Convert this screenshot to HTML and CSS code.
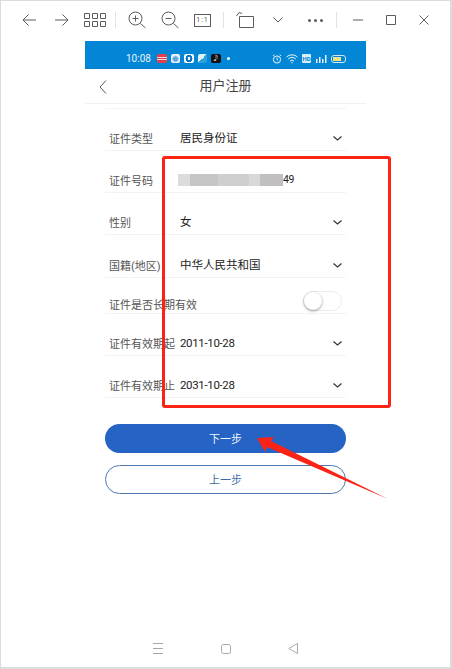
FILE: index.html
```html
<!DOCTYPE html>
<html lang="zh-CN">
<head>
  <meta charset="UTF-8">
  <title>用户注册</title>
  <meta name="viewport" content="width=device-width, initial-scale=1.0">
  <link rel="stylesheet" href="styles.css">
</head>

<body>
  <div class="window">
    <!-- viewer toolbar -->
    <div class="toolbar">
      <span class="tool"><svg width="14" height="12" viewBox="0 0 14 12"><path d="M14 6H1M6.500.5 1 6l5.500 5.500"/></svg></span>
      <span class="tool"><svg width="14" height="12" viewBox="0 0 14 12"><path d="M0 6h13M7.500.5 13 6l-5.500 5.500"/></svg></span>
      <span class="tool"><svg width="22" height="14" viewBox="0 0 22 14"><path d="M.5.500h5v5h-5zM8.500.500h5v5h-5zM16.500.500h5v5h-5zM.5 8.500h5v5h-5zM8.500 8.500h5v5h-5zM16.500 8.500h5v5h-5z"/></svg></span>
      <span class="sep"></span>
      <span class="tool"><svg width="18" height="18" viewBox="0 0 18 18"><circle cx="7.500" cy="7.500" r="6.500"/><path d="m12.500 12.500 5 4.500M4.500 7.500h6M7.500 4.500v6"/></svg></span>
      <span class="tool"><svg width="18" height="18" viewBox="0 0 18 18"><circle cx="7.500" cy="7.500" r="6.500"/><path d="m12.500 12.500 5 4.500M4.500 7.500h6"/></svg></span>
      <span class="tool"><span class="one-to-one">1:1</span></span>
      <span class="sep"></span>
      <span class="tool"><svg width="18" height="18" viewBox="0 0 18 18"><path d="M3.500 5.500h14v11h-14zM.5 5 3 1.500 6 2.500"/></svg></span>
      <span class="tool"><svg width="10" height="6" viewBox="0 0 10 6"><path d="m.5.500 4.500 4.500 4.500-4.500"/></svg></span>
      <span class="tool tool-dots"><i></i><i></i><i></i></span>
      <span class="sep"></span>
      <span class="tool"><svg width="10" height="2" viewBox="0 0 10 2"><path d="M0 1h10"/></svg></span>
      <span class="tool"><svg width="10" height="10" viewBox="0 0 10 10"><path d="M.5.500h9v9h-9z"/></svg></span>
      <span class="tool"><svg width="10" height="10" viewBox="0 0 10 10"><path d="m.5.500 9 9M9.500.500l-9 9"/></svg></span>
    </div>

    <div class="phone">
      <div class="status-bar">
        <span class="time">10:08</span>
        <span class="app-icons">
          <span class="app app-red"></span>
          <span class="app app-paw"></span>
          <span class="app app-ring"></span>
          <span class="app app-send"></span>
          <span class="app app-tiktok">♪</span>
          <span class="dot"></span>
        </span>
        <span class="sys-icons">
          <svg width="10" height="10" viewBox="0 0 10 10"><circle cx="5" cy="5.500" r="3.600"/><path d="M5 3.500v2l1.200 1M1 1.800 2.300.8M9 1.800 7.700.8"/></svg>
          <svg width="12" height="10" viewBox="0 0 12 10"><path d="M.5 3a8 8 0 0 1 11 0M2.200 5a5.500 5.500 0 0 1 7.600 0M4 7a3 3 0 0 1 4 0M5.300 8.800a1 1 0 0 1 1.400 0"/></svg>
          <span class="hd">HD</span>
          <svg class="signal" width="12" height="10" viewBox="0 0 12 10"><path d="M1 5h1.500v4H1zM4 3h1.500v6H4zM7 5h1.500v4H7zM10 1h1.500v8H10z"/></svg>
          <span class="battery"><span class="battery-level"></span></span>
        </span>
      </div>

      <div class="page-header">
        <svg class="back" width="8" height="14" viewBox="0 0 8 14"><path d="M7 .5 1 7l6 6.500"/></svg>
        <span>用户注册</span>
      </div>

      <div class="form">
        <div class="row">
          <span class="label">证件类型</span>
          <span class="value">居民身份证</span>
          <svg class="chevron" width="9" height="5" viewBox="0 0 9 5"><path d="m.5.500 4 3.500 4-3.500"/></svg>
        </div>
        <div class="row">
          <span class="label">证件号码</span>
          <span class="value value-id"><span class="id-mask"></span>49</span>
        </div>
        <div class="row">
          <span class="label">性别</span>
          <span class="value">女</span>
          <svg class="chevron" width="9" height="5" viewBox="0 0 9 5"><path d="m.5.500 4 3.500 4-3.500"/></svg>
        </div>
        <div class="row row-tall">
          <span class="label">国籍(地区)</span>
          <span class="value">中华人民共和国</span>
          <svg class="chevron" width="9" height="5" viewBox="0 0 9 5"><path d="m.5.500 4 3.500 4-3.500"/></svg>
        </div>
        <div class="row row-switch">
          <span class="label">证件是否长期有效</span>
          <span class="switch"><span class="knob"></span></span>
        </div>
        <div class="row">
          <span class="label">证件有效期起</span>
          <span class="value value-date">2011-10-28</span>
          <svg class="chevron" width="9" height="5" viewBox="0 0 9 5"><path d="m.5.500 4 3.500 4-3.500"/></svg>
        </div>
        <div class="row">
          <span class="label">证件有效期止</span>
          <span class="value value-date">2031-10-28</span>
          <svg class="chevron" width="9" height="5" viewBox="0 0 9 5"><path d="m.5.500 4 3.500 4-3.500"/></svg>
        </div>

        <div class="buttons">
          <button class="btn btn-next">下一步</button>
          <button class="btn btn-prev">上一步</button>
        </div>
      </div>

      <div class="nav-bar">
        <svg width="10" height="11" viewBox="0 0 10 11"><path d="M0 .5h10M0 5.500h10M0 10.500h10"/></svg>
        <svg width="10" height="10" viewBox="0 0 10 10"><rect x=".5" y=".5" width="9" height="9" rx="2"/></svg>
        <svg width="10" height="11" viewBox="0 0 10 11"><path d="M9.500.500v10L.8 5.500z"/></svg>
      </div>
    </div>

    <!-- red annotations drawn over the screenshot -->
    <div class="callout"></div>
    <svg class="arrow" width="140" height="72" viewBox="0 0 140 72">
      <path d="M2 9 19 8 16 12 133 70 12 18 10 23z"/>
    </svg>
  </div>
</body>
</html>
```

FILE: styles.css
```css
html, body {
  margin: 0;
  padding: 0;
  height: 100%;
  overflow: hidden;
  background-color: #fff;
  font-family: "Roboto", "Noto Sans CJK SC", sans-serif;
}

.window {
  position: relative;
  display: flex;
  flex-direction: column;
  box-sizing: border-box;
  height: 669px;
  border: 1px solid #dcdcdc;
  border-right-width: 2px;
  border-bottom-width: 2px;
}

/* toolbar */
.toolbar {
  display: flex;
  align-items: center;
  flex: 0 0 40px;
  box-sizing: border-box;
  padding: 0 0 2px 11px;
}

.toolbar svg {
  fill: none;
  stroke: #5c5c5c;
  stroke-width: 1;
}

.tool {
  display: flex;
  justify-content: center;
  align-items: center;
  width: 33px;
  height: 18px;
}

.tool-dots {
  gap: 3px;
  margin-left: 5px;
}

.tool-dots i {
  width: 3px;
  height: 3px;
  border-radius: 50%;
  background: #5c5c5c;
}

.sep {
  width: 1px;
  height: 16px;
  margin: 0 4px;
  background: #e2e2e2;
}

.one-to-one {
  box-sizing: border-box;
  width: 17px;
  height: 13px;
  border: 1px solid #5c5c5c;
  color: #5c5c5c;
  font-size: 7px;
  line-height: 11px;
  text-align: center;
  letter-spacing: 1px;
}

/* phone screenshot */
.phone {
  display: flex;
  flex-direction: column;
  flex: 1;
  width: 281px;
  margin-left: 84px;
}

.status-bar {
  display: flex;
  align-items: center;
  box-sizing: border-box;
  height: 28px;
  padding: 8px 20px 0 41px;
  background: #0486d6;
  border-bottom: 1px solid #0a7cc6;
  color: #e8f4fb;
}

.time {
  width: 31px;
  font-size: 10px;
}

.app-icons {
  display: flex;
  align-items: center;
  gap: 4px;
}

.app {
  box-sizing: border-box;
  width: 9.500px;
  height: 9.500px;
  border-radius: 2px;
  background: #fff;
}

.app-red {
  background: linear-gradient(#e5404a 0 30%, #f6d5d7 30% 45%, #e5404a 45% 60%, #f6d5d7 60% 72%, #e5404a 72%);
}

.app-paw {
  background: radial-gradient(circle at 50% 55%, #5fa5de 0 30%, #eaf3fb 55%);
}

.app-ring {
  background: radial-gradient(circle, #fff 0 18%, #0b78cc 20% 50%, #fff 54%);
}

.app-send {
  background: linear-gradient(135deg, #dff2fb 50%, #2aa3dc 50%);
}

.app-tiktok {
  background: #111;
  color: #fff;
  font-size: 7px;
  line-height: 9.500px;
  text-align: center;
}

.dot {
  width: 3px;
  height: 3px;
  margin-left: 2px;
  border-radius: 50%;
  background: #fff;
}

.sys-icons {
  display: flex;
  align-items: center;
  gap: 4px;
  margin-left: auto;
}

.sys-icons svg {
  fill: none;
  stroke: #e8f4fb;
  stroke-width: 1;
}

.sys-icons .signal {
  fill: #e8f4fb;
  stroke: none;
}

.hd {
  width: 9px;
  height: 9px;
  border-radius: 1px;
  background: #d8edf9;
  color: #0486d6;
  font-size: 6px;
  font-weight: 700;
  line-height: 9px;
  text-align: center;
}

.battery {
  box-sizing: border-box;
  width: 15px;
  height: 8px;
  padding: 1px;
  border: 1px solid #cfe7f6;
  border-radius: 3px;
}

.battery-level {
  display: block;
  width: 8px;
  height: 100%;
  background: #f7e07f;
}

.page-header {
  position: relative;
  display: flex;
  justify-content: center;
  align-items: center;
  box-sizing: border-box;
  height: 35px;
  padding-bottom: 3px;
  border-bottom: 1px solid #f1f1f1;
  color: #444;
  font-size: 13px;
}

.back {
  position: absolute;
  left: 14px;
  top: 11px;
  fill: none;
  stroke: #555;
  stroke-width: 1;
}

.form {
  margin: 4px 20px 0;
  border-top: 1px solid #f4f4f4;
}

.row {
  display: flex;
  align-items: flex-end;
  box-sizing: border-box;
  height: 42px;
  padding: 0 4px 3px;
  border-bottom: 1px solid #f3f3f3;
}

.row-tall {
  height: 43px;
}

.row-switch {
  height: 36px;
}

.label {
  flex: 0 0 71px;
  margin-bottom: -1px;
  color: #555;
  font-size: 11px;
  line-height: 16px;
  white-space: nowrap;
}

.row-switch .label {
  margin-bottom: -4px;
}

.value {
  color: #222;
  font-size: 11.500px;
  line-height: 18px;
}

.value-date {
  letter-spacing: -0.35px;
}

.value-id {
  display: flex;
  align-items: center;
  margin-left: -2px;
  font-size: 10.500px;
  letter-spacing: -0.4px;
}

.id-mask {
  width: 105px;
  height: 12px;
  background: linear-gradient(90deg, #dcdcdc 0 11%, #c6c6c6 11% 38%, #cfcfcf 38% 68%, #d8d8d8 68% 78%, #c0c0c0 78%);
}

.chevron {
  margin: 0 0 6px auto;
  fill: none;
  stroke: #333;
  stroke-width: 1.200;
}

.switch {
  box-sizing: border-box;
  width: 39px;
  height: 20px;
  margin-left: auto;
  margin-bottom: -1px;
  border: 1px solid #ececec;
  border-radius: 10px;
}

.knob {
  display: block;
  width: 18px;
  height: 18px;
  border-radius: 50%;
  background: #fff;
  box-shadow: 0 1px 3px rgba(0, 0, 0, 0.4);
}

.buttons {
  display: flex;
  flex-direction: column;
  gap: 12px;
  margin-top: 26px;
}

.btn {
  height: 29px;
  padding: 0 0 1px;
  border-radius: 15px;
  font-family: inherit;
  font-size: 11px;
}

.btn-next {
  border: none;
  background: #2563c4;
  color: #f2f6fc;
}

.btn-prev {
  border: 1px solid #4f79ad;
  background: #fff;
  color: #3f6ca6;
}

.nav-bar {
  display: flex;
  justify-content: space-between;
  align-items: center;
  margin-top: auto;
  padding: 0 68px 13px;
}

.nav-bar svg {
  fill: none;
  stroke: #a8a8a8;
  stroke-width: 1;
}

/* annotations */
.callout {
  position: absolute;
  left: 161px;
  top: 155px;
  box-sizing: border-box;
  width: 229px;
  height: 252px;
  border: 3px solid #fb2216;
  border-radius: 3px;
}

.arrow {
  position: absolute;
  left: 254px;
  top: 428px;
  fill: #fb2216;
}
```
